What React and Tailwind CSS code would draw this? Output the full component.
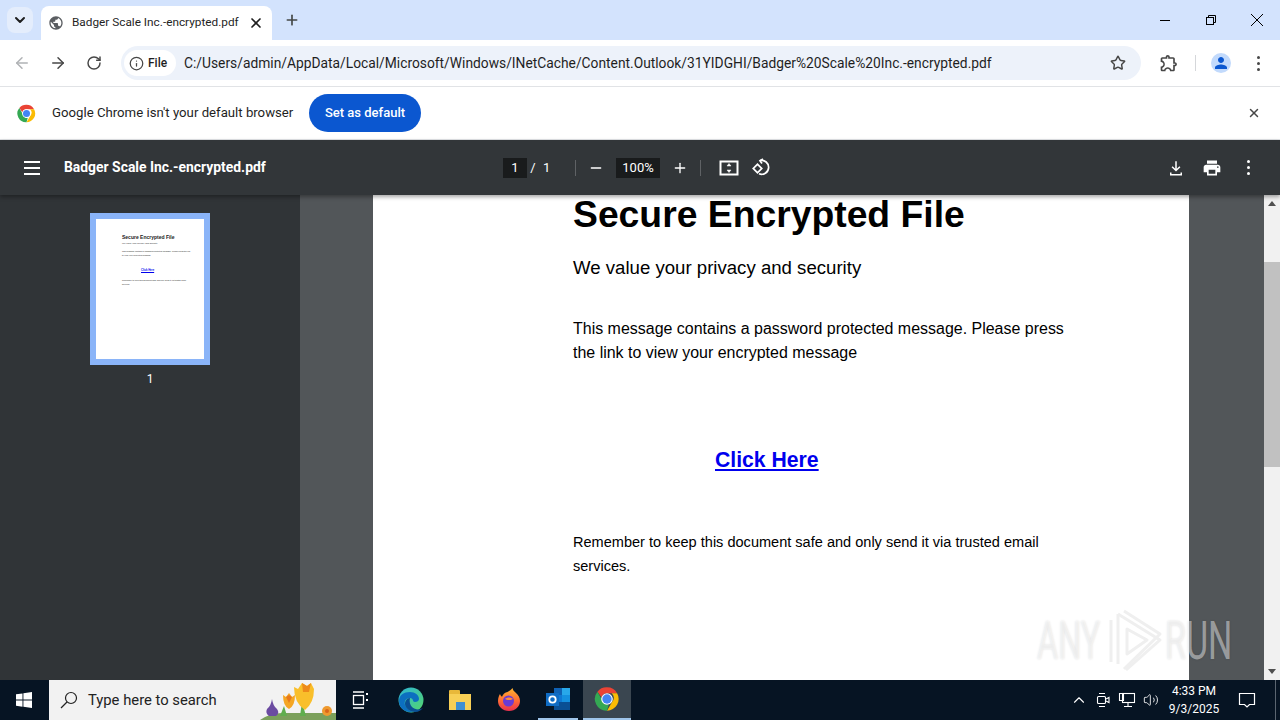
import React from 'react';
import { ArrowLeft, ArrowRight, RotateCw, Star, X, Plus, ChevronDown, ChevronUp, Info, Minus, Volume2 } from 'lucide-react';

const UI = "font-['Roboto','Noto_Sans',sans-serif]";

function Globe({ className }) {
  return (
    <svg viewBox="0 0 24 24" className={className} fill="currentColor">
      <path d="M12 2C6.48 2 2 6.48 2 12s4.48 10 10 10 10-4.48 10-10S17.52 2 12 2zm-1 17.93c-3.95-.49-7-3.85-7-7.93 0-.62.08-1.21.21-1.79L9 15v1c0 1.1.9 2 2 2v1.93zm6.9-2.54c-.26-.81-1-1.39-1.9-1.39h-1v-3c0-.55-.45-1-1-1H8v-2h2c.55 0 1-.45 1-1V7h2c1.1 0 2-.9 2-2v-.41c2.93 1.19 5 4.06 5 7.41 0 2.08-.8 3.97-2.1 5.39z" />
    </svg>
  );
}

function ChromeLogo({ className }) {
  return (
    <svg viewBox="0 0 48 48" className={className}>
      <path d="M24 4a20 20 0 0 1 17.3 10H24a10 10 0 0 0-9.5 6.9L7.6 11.5A20 20 0 0 1 24 4z" fill="#ea4335" />
      <path d="M41.3 14A20 20 0 0 1 24 44l8.7-15a10 10 0 0 0-.7-15z" fill="#fbbc04" />
      <path d="M24 44A20 20 0 0 1 7.6 11.5L16 26a10 10 0 0 0 11 7.6L24 44z" fill="#34a853" />
      <circle cx="24" cy="24" r="10" fill="#fff" />
      <circle cx="24" cy="24" r="8" fill="#4285f4" />
    </svg>
  );
}

function TabStrip() {
  return (
    <div className="h-10 shrink-0 bg-[#d3e3fd] flex items-end relative">
      <div className="ml-[7px] mb-[7px] w-[26px] h-[26px] rounded-lg bg-[#e4edfc] flex items-center justify-center">
        <ChevronDown className="w-4 h-4 text-[#1f1f1f]" strokeWidth={3} />
      </div>
      <div className="ml-2 w-[231px] h-[34px] bg-white rounded-t-lg flex items-center pl-[7px] relative">
        <Globe className="w-4 h-4 text-[#5b5e62]" />
        <span className="ml-2 text-[11.8px] text-[#1f1f1f] w-[176px] whitespace-nowrap">Badger Scale Inc.-encrypted.pdf</span>
        <X className="w-4 h-4 text-[#1f1f1f]" strokeWidth={2.5} />
      </div>
      <Plus className="ml-3 mb-3 w-4 h-4 text-[#444746]" strokeWidth={2.5} />
      <div className="ml-auto flex h-full">
        <div className="w-[46px] flex items-center justify-center">
          <span className="w-[10px] h-px bg-black" />
        </div>
        <div className="w-[46px] flex items-center justify-center">
          <svg viewBox="0 0 12 12" className="w-3 h-3" fill="none" stroke="#000" strokeWidth="1">
            <rect x="1.5" y="3.5" width="7" height="7" />
            <path d="M3.5 3.5v-2h7v7h-2" />
          </svg>
        </div>
        <div className="w-[46px] flex items-center justify-center">
          <svg viewBox="0 0 14 14" className="w-[14px] h-[14px]" fill="none" stroke="#000" strokeWidth="1">
            <path d="M1 1l12 12M13 1L1 13" />
          </svg>
        </div>
      </div>
    </div>
  );
}

function AddressBar() {
  return (
    <div className="h-[47px] shrink-0 bg-white rounded-t-lg border-b border-[#e1e3e6] flex items-center relative">
      <ArrowLeft className="ml-[13px] w-[18px] h-[18px] text-[#b0b2b5]" strokeWidth={2} />
      <ArrowRight className="ml-[18px] w-[18px] h-[18px] text-[#474747]" strokeWidth={2} />
      <RotateCw className="ml-[19px] w-4 h-4 text-[#474747]" strokeWidth={2.2} />
      <div className="ml-[19px] w-[1020px] h-[34px] rounded-full bg-[#edf2fa] flex items-center">
        <div className="ml-[3px] h-[26px] w-[52px] rounded-full bg-white flex items-center pl-[5px]">
          <Info className="w-[15px] h-[15px] text-[#474747]" strokeWidth={2} />
          <span className="ml-1 text-xs font-medium text-[#1f1f1f]">File</span>
        </div>
        <span className="ml-[8px] text-[13.8px] text-[#1f1f1f] whitespace-nowrap">C:/Users/admin/AppData/Local/Microsoft/Windows/INetCache/Content.Outlook/31YIDGHI/Badger%20Scale%20Inc.-encrypted.pdf</span>
        <Star className="ml-auto mr-[15px] w-4 h-4 text-[#474747]" strokeWidth={2.2} />
      </div>
      <svg viewBox="0 0 24 24" className="ml-[18px] w-[20px] h-[20px]" fill="#474747">
        <path d="M10.5 4.500c.28 0 .5.220.5.500v2h6v6h2c.28 0 .5.220.5.500s-.22.500-.5.500h-2v6h-2.120c-.68-1.750-2.390-3-4.380-3s-3.700 1.250-4.380 3H4v-2.120c1.750-.68 3-2.390 3-4.380 0-1.990-1.240-3.700-2.990-4.380L4 7h6V5c0-.28.220-.5.500-.5m0-2C9.120 2.500 8 3.620 8 5H4c-1.100 0-1.990.9-1.990 2v3.800h.490c1.490 0 2.700 1.210 2.700 2.700s-1.210 2.700-2.700 2.700H2V20c0 1.100.9 2 2 2h3.800v-.5c0-1.490 1.210-2.700 2.700-2.700 1.490 0 2.700 1.210 2.700 2.700v.5H17c1.100 0 2-.9 2-2v-4c1.380 0 2.500-1.120 2.500-2.500S20.380 11 19 11V7c0-1.100-.9-2-2-2h-4c0-1.380-1.120-2.500-2.500-2.500z" />
      </svg>
      <div className="ml-[16px] w-px h-4 bg-[#d5d7da]" />
      <div className="ml-[15px] w-5 h-5 rounded-full bg-[#c2dafc] flex items-center justify-center">
        <svg viewBox="0 0 24 24" className="w-[18px] h-[18px]" fill="#0b57d0">
          <path d="M12 12c2.21 0 4-1.79 4-4s-1.79-4-4-4-4 1.79-4 4 1.79 4 4 4zm0 2c-2.67 0-8 1.34-8 4v2h16v-2c0-2.66-5.33-4-8-4z" />
        </svg>
      </div>
      <div className="ml-[26px] flex flex-col gap-[3px]">
        <span className="w-[3px] h-[3px] rounded-full bg-[#474747]" />
        <span className="w-[3px] h-[3px] rounded-full bg-[#474747]" />
        <span className="w-[3px] h-[3px] rounded-full bg-[#474747]" />
      </div>
    </div>
  );
}

function InfoBar() {
  return (
    <div className="h-[53px] shrink-0 bg-white border-b border-[#e1e3e6] flex items-center">
      <ChromeLogo className="ml-4 w-[21px] h-[21px]" />
      <span className="ml-[15px] text-[13.2px] text-[#1f1f1f] w-[257px] whitespace-nowrap">Google Chrome isn't your default browser</span>
      <div className="h-[38px] w-[112px] rounded-full bg-[#0b57d0] text-white text-[13px] font-medium flex items-center justify-center">Set as default</div>
      <X className="ml-auto mr-[19px] w-[14px] h-[14px] text-[#474747]" strokeWidth={2.5} />
    </div>
  );
}

function PdfToolbar() {
  return (
    <div className="h-[55px] shrink-0 bg-[#323639] flex items-center text-white relative z-10 shadow-[0_2px_4px_rgba(0,0,0,0.35)]">
      <div className="ml-6 w-4 flex flex-col gap-[4px]">
        <span className="h-[2px] bg-white" />
        <span className="h-[2px] bg-white" />
        <span className="h-[2px] bg-white" />
      </div>
      <span className="ml-6 w-[439px] text-[13.9px] font-bold whitespace-nowrap">Badger Scale Inc.-encrypted.pdf</span>
      <div className="w-6 h-5 bg-[#191b1c] text-[13px] flex items-center justify-center">1</div>
      <span className="w-3 text-center text-[13px]">/</span>
      <span className="w-[10px] ml-1 text-[13px]">1</span>
      <div className="ml-[22px] w-px h-4 bg-[#5f6265]" />
      <Minus className="ml-3 w-4 h-4" strokeWidth={2} />
      <div className="ml-3 w-11 h-5 bg-[#191b1c] text-[13px] flex items-center justify-center">100%</div>
      <Plus className="ml-3 w-4 h-4" strokeWidth={2} />
      <div className="ml-3 w-px h-4 bg-[#5f6265]" />
      <svg viewBox="0 0 20 20" className="ml-[18px] w-5 h-5" fill="none" stroke="#fff">
        <rect x="1.5" y="3.5" width="17" height="13" strokeWidth="2" />
        <path d="M10 5.5l-2 2.5h4zM10 14.5l-2-2.500h4z" fill="#fff" strokeWidth="0.5" />
      </svg>
      <svg viewBox="0 0 20 20" className="ml-[13px] w-5 h-5" fill="none" stroke="#fff" strokeWidth="1.7">
        <path d="M8 2.500a7 7 0 1 1-1 13.300" />
        <path d="M11 1l-3 1.700 2 2.800" />
        <rect x="2.500" y="7.500" width="6" height="6" transform="rotate(45 5.500 10.500)" />
      </svg>
      <svg viewBox="0 0 24 24" className="ml-[395px] w-[18px] h-[18px]" fill="#fff">
        <path d="M11 3h2v10l3.500-3.500 1.400 1.400L12 16.800l-5.900-5.900 1.400-1.400L11 13zM4 18h2v2h12v-2h2v4H4z" />
      </svg>
      <svg viewBox="0 0 24 24" className="ml-[17px] w-5 h-5" fill="#fff">
        <path d="M19 8H5c-1.660 0-3 1.340-3 3v6h4v4h12v-4h4v-6c0-1.660-1.340-3-3-3zm-3 11H8v-5h8v5zm3-7c-.550 0-1-.450-1-1s.450-1 1-1 1 .450 1 1-.450 1-1 1zm-1-9H6v4h12V3z" />
      </svg>
      <div className="ml-[25px] flex flex-col gap-[3px]">
        <span className="w-[3px] h-[3px] rounded-full bg-white" />
        <span className="w-[3px] h-[3px] rounded-full bg-white" />
        <span className="w-[3px] h-[3px] rounded-full bg-white" />
      </div>
    </div>
  );
}

function Sidebar() {
  return (
    <div className="w-[300px] shrink-0 bg-[#303437] flex flex-col items-center pt-[18px]">
      <div className="w-[120px] h-[152px] border-[6px] border-[#8ab4f8] bg-white pl-[26px] pt-[15px] font-['Liberation_Sans',Arial,sans-serif] text-[#222]">
        <p className="text-[5px] leading-[6px] font-bold whitespace-nowrap">Secure Encrypted File</p>
        <p className="mt-[2px] text-[2.3px] leading-[3px] whitespace-nowrap">We value your privacy and security</p>
        <p className="mt-[5px] w-[70px] text-[2px] leading-[3.5px]">This message contains a password protected message. Please press the link to view your encrypted message</p>
        <p className="mt-[12px] ml-[19px] text-[2.7px] leading-[3px] font-bold text-[#0000ee] underline whitespace-nowrap">Click Here</p>
        <p className="mt-[7px] w-[66px] text-[2px] leading-[3.5px]">Remember to keep this document safe and only send it via trusted email services.</p>
      </div>
      <span className="mt-[6px] text-xs text-white">1</span>
    </div>
  );
}

function PdfPage() {
  return (
    <div className="flex-1 bg-[#525659] overflow-hidden relative pl-[73px]">
      <div className="w-[816px] h-full bg-white pl-[200px] font-['Liberation_Sans',Arial,sans-serif] text-black">
        <h1 className="text-[37.3px] leading-[38px] font-bold whitespace-nowrap">Secure Encrypted File</h1>
        <p className="mt-[23px] text-[18.62px] leading-[24px] whitespace-nowrap">We value your privacy and security</p>
        <p className="mt-[37px] w-[510px] text-[15.97px] leading-[24px]">This message contains a password protected message. Please press the link to view your encrypted message</p>
        <p className="mt-[83px] ml-[142px] text-[21.2px] leading-[24px] font-bold text-[#0000ee] underline whitespace-nowrap">Click Here</p>
        <p className="mt-[58px] w-[490px] text-[14.55px] leading-[24px]">Remember to keep this document safe and only send it via trusted email services.</p>
      </div>
    </div>
  );
}

function Scrollbar() {
  return (
    <div className="w-4 shrink-0 bg-[#f1f1f1] flex flex-col items-center">
      <div className="h-[17px] flex items-center justify-center">
        <span className="border-x-4 border-x-transparent border-b-[5px] border-b-[#505050]" />
      </div>
      <div className="mt-[50px] w-full h-[205px] bg-[#c1c1c1]" />
      <div className="mt-auto h-[17px] flex items-center justify-center">
        <span className="border-x-4 border-x-transparent border-t-[5px] border-t-[#505050]" />
      </div>
    </div>
  );
}

function Watermark() {
  return (
    <div className="absolute left-[1037px] top-[608px] w-[194px] h-[64px] flex items-center font-['Roboto',sans-serif] font-normal text-[54px] text-white/45 [text-shadow:0_0_3px_rgba(0,0,0,0.13)] pointer-events-none">
      <span className="w-[66px] scale-x-[0.6] origin-left">ANY</span>
      <svg viewBox="0 0 62 64" className="w-[62px] h-[64px]" fill="none" stroke="#efefef" strokeWidth="3" strokeLinejoin="round">
        <path d="M8 12v42" />
        <path d="M15 6v50M21 3l36 23-36 35" />
        <path d="M15 6l42 26-34 30" />
        <path d="M24 21l20 11-20 14z" />
      </svg>
      <span className="w-[66px] scale-x-[0.63] origin-left">RUN</span>
    </div>
  );
}

function EdgeIcon() {
  return (
    <svg viewBox="0 0 26 26" className="ml-7 w-[26px] h-[26px]">
      <defs>
        <linearGradient id="edgeTop" x1="0" y1="0" x2="1" y2="1">
          <stop offset="0" stopColor="#2cb5d8" />
          <stop offset="1" stopColor="#55d66b" />
        </linearGradient>
      </defs>
      <circle cx="13" cy="13" r="12.5" fill="url(#edgeTop)" />
      <path d="M1 14C1 8 6 5 12 5c5 0 9 3 9 7 0 2-2 3-4 3-3 0-1-4-5-4-4 0-6 3-5 7 1 3 4 6 9 7C8 26 1 22 1 14z" fill="#0c6fc0" />
      <path d="M12 11c-3 0-5 3-5 6 0 4 5 8 10 8 4 0 6-2 8-4-3 2-8 2-11-1-2-2-3-6-2-9z" fill="#0a4f94" />
    </svg>
  );
}

function FolderIcon() {
  return (
    <div className="ml-[25px] w-[22px] h-5 flex flex-col">
      <div className="h-[4px] w-[11px] bg-[#e8b83a] rounded-t-[1px]" />
      <div className="flex-1 bg-[#f7cf56] flex items-end justify-center">
        <span className="w-[9px] h-[8px] bg-[#3f8fd2]" />
      </div>
    </div>
  );
}

function FirefoxIcon() {
  return (
    <svg viewBox="0 0 24 24" className="ml-[26px] w-6 h-6">
      <defs>
        <linearGradient id="foxBody" x1="0.5" y1="0" x2="0.5" y2="1">
          <stop offset="0" stopColor="#ffb52e" />
          <stop offset="0.55" stopColor="#ff6b35" />
          <stop offset="1" stopColor="#e8304f" />
        </linearGradient>
      </defs>
      <path d="M12 23C5.500 23 1 18.500 1 13c0-3 1-5.500 2-7 .5 1.500 1.200 2.300 2 2.700C6 6 8 4.500 10.500 4 12 3 14 2 15.500 0c.5 2.500 1.500 3 3 4.500 3 2.500 4.500 5.500 4.500 8.500 0 5.500-4.500 10-11 10z" fill="url(#foxBody)" />
      <circle cx="11.500" cy="13" r="5.500" fill="#6a3bd4" />
      <path d="M8 11c2-2 6-2 8 0-1 .5-2 1-4 1s-3-.5-4-1z" fill="#ff8a3c" />
    </svg>
  );
}

function OutlookIcon() {
  return (
    <svg viewBox="0 0 24 22" className="w-6 h-[22px]">
      <rect x="8" y="0" width="8" height="7" fill="#0f62b5" />
      <rect x="16" y="0" width="8" height="7" fill="#28a8ea" />
      <rect x="8" y="7" width="8" height="7" fill="#0f78d4" />
      <rect x="16" y="7" width="8" height="7" fill="#1490df" />
      <rect x="8" y="14" width="16" height="8" fill="#0a4f94" />
      <rect x="0" y="5" width="13" height="13" fill="#0f6cc4" />
      <circle cx="6.500" cy="11.500" r="3.200" fill="none" stroke="#fff" strokeWidth="1.800" />
    </svg>
  );
}

function Taskbar() {
  return (
    <div className={`h-10 shrink-0 bg-[#061423] flex items-center text-white ${UI}`}>
      <div className="w-12 flex justify-center">
        <svg viewBox="0 0 16 16" className="w-4 h-4" fill="#fff">
          <path d="M0 2.300l6.500-.900v6.200H0zM7.400 1.300L16 0v7.600H7.400zM0 8.500h6.500v6.200L0 13.800zM7.400 8.500H16V16l-8.600-1.200z" />
        </svg>
      </div>
      <div className="w-[287px] ml-px h-full bg-[#f2f2f2] flex items-center relative overflow-hidden">
        <svg viewBox="0 0 20 20" className="ml-[10px] w-[20px] h-[20px]" fill="none" stroke="#222" strokeWidth="1.2">
          <circle cx="12" cy="8" r="5.500" />
          <path d="M8 12l-6 6" />
        </svg>
        <span className="ml-[9px] text-[14.8px] text-[#222]">Type here to search</span>
        <svg viewBox="0 0 80 40" className="absolute right-0 top-0 w-[80px] h-10">
          <path d="M4 40q10-7 22-7h54v7z" fill="#7ba05b" />
          <path d="M16 19q1 7 5 10 3 4-1 7h-7q-4-3-2-7 4-3 5-10z" fill="#6b4ba1" />
          <path d="M24 36l4-10 3 10zM44 36l2-14 4 14z" fill="#5fae4e" />
          <path d="M27 15l3 2 3-4 3 4 3-2q0 11-6 14-6-3-6-14z" fill="#f5a623" />
          <path d="M33 15l3 2-3 6-3-6z" fill="#e8791c" />
          <path d="M38 7l4 2 4-6 5 3 4-3 3 6q0 14-9 21-11-7-11-23z" fill="#f9bf2b" />
          <path d="M46 3l5 3 4-3-2 9h-6z" fill="#ed8a1a" />
          <circle cx="71" cy="31" r="5" fill="#ef9a2e" />
          <circle cx="71" cy="31" r="2" fill="#d9651c" />
        </svg>
      </div>
      <svg viewBox="0 0 20 20" className="ml-[14px] w-5 h-5" fill="none" stroke="#fff" strokeWidth="1.3">
        <path d="M3 2h11M3 18h11" />
        <rect x="3.500" y="5.500" width="10" height="9" />
        <path d="M16 3h2v2h-2zM16 9h2v2h-2z" fill="#fff" stroke="none" />
      </svg>
      <EdgeIcon />
      <FolderIcon />
      <FirefoxIcon />
      <div className="ml-[17px] w-10 h-full flex items-center justify-center border-b-2 border-[#9fc5ea]">
        <OutlookIcon />
      </div>
      <div className="ml-[5px] w-12 h-full flex items-center justify-center bg-[#3a4650] border-b-2 border-[#9fc5ea]">
        <ChromeLogo className="w-7 h-7" />
      </div>
      <ChevronUp className="ml-[439px] w-[18px] h-[18px]" strokeWidth={1.5} />
      <svg viewBox="0 0 16 16" className="ml-[7px] w-4 h-4" fill="none" stroke="#fff" strokeWidth="1.1">
        <rect x="2.500" y="4.500" width="8" height="7" rx="1" />
        <path d="M11 7l3-1.500v5L11 9M4 1.500h6M4 14.500h6" />
      </svg>
      <svg viewBox="0 0 18 16" className="ml-[7px] w-[18px] h-4" fill="none" stroke="#fff" strokeWidth="1.1">
        <rect x="4.500" y="1.500" width="12" height="9" />
        <path d="M1.500 1.500h4v7h-4zM10 11v3M6 14.500h8" />
      </svg>
      <Volume2 className="ml-[7px] w-4 h-4" strokeWidth={1.3} />
      <div className="ml-1 w-[62px] text-center text-xs leading-[18px]">
        <div>4:33 PM</div>
        <div>9/3/2025</div>
      </div>
      <svg viewBox="0 0 18 18" className="ml-[13px] w-[18px] h-[18px]" fill="none" stroke="#fff" strokeWidth="1.2">
        <path d="M1.500 2.500h15v11h-5l-2.500 2.500-2.500-2.500h-5z" />
      </svg>
      <div className="ml-[19px] w-px h-full bg-[#5a6570]" />
    </div>
  );
}

export default function App() {
  return (
    <div className={`w-[1280px] h-[720px] flex flex-col overflow-hidden relative bg-white ${UI}`}>
      <TabStrip />
      <AddressBar />
      <InfoBar />
      <PdfToolbar />
      <div className="flex-1 flex min-h-0">
        <Sidebar />
        <PdfPage />
        <Scrollbar />
      </div>
      <Taskbar />
      <Watermark />
    </div>
  );
}
